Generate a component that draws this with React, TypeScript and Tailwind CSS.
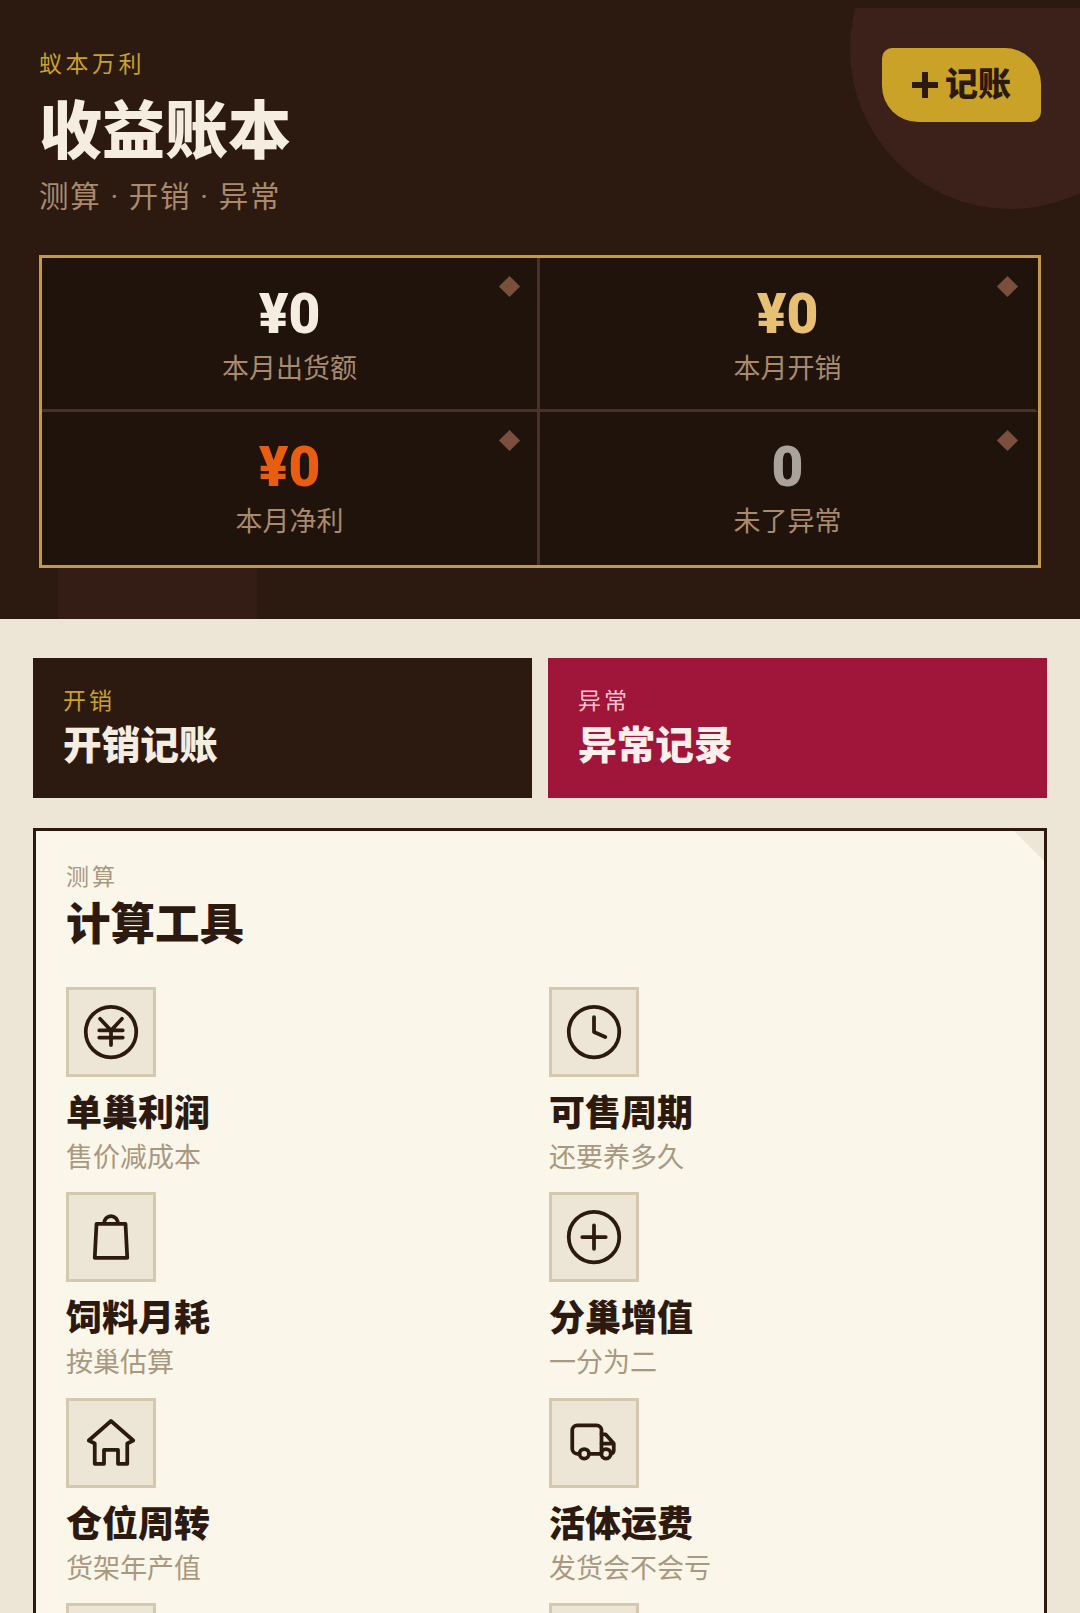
import type { ReactNode } from "react";

const cjk = "font-['Roboto','Noto_Sans_CJK_SC',sans-serif]";

function Stat({
  value,
  label,
  color,
  right,
  bottom
}: {
  value: string;
  label: string;
  color: string;
  right?: boolean;
  bottom?: boolean;
}) {
  return (
    <div
      className={`relative flex flex-col items-center border-r-[3px] ${
        right ? "border-r-transparent" : "border-r-[#4a3228]"
      } ${bottom ? "h-[153px] pt-[25px]" : "h-[154px] border-b-[3px] border-b-[#4a3228] pt-[26px]"}`}
    >
      <div className={`text-[55px] leading-[60px] font-black ${color}`}>{value}</div>
      <div className="mt-[7px] text-[27px] leading-[36px] text-[#a98a6d]">{label}</div>
      <span className="absolute top-[21px] right-[20px] h-[15px] w-[15px] rotate-45 bg-[#7a4f3c]" />
    </div>
  );
}

function Action({
  eyebrow,
  title,
  bg,
  eyebrowColor,
  titleColor
}: {
  eyebrow: string;
  title: string;
  bg: string;
  eyebrowColor: string;
  titleColor: string;
}) {
  return (
    <div className={`h-[140px] px-[30px] pt-[28px] ${bg}`}>
      <div className={`text-[23px] leading-[32px] tracking-[3px] ${eyebrowColor}`}>{eyebrow}</div>
      <div className={`mt-[2px] text-[38.7px] leading-[52px] font-black ${titleColor}`}>{title}</div>
    </div>
  );
}

function Tool({ icon, title, desc }: { icon?: ReactNode; title?: string; desc?: string }) {
  return (
    <div className="h-[205.4px]">
      <div className="flex h-[90px] w-[90px] items-center justify-center border-[3px] border-[#d4c8ae] bg-[#ede5d6] text-[#2c1a10]">
        {icon}
      </div>
      <div className="mt-[13px] text-[36px] leading-[48px] font-black text-[#2c1a10]">{title}</div>
      <div className="mt-[1px] text-[27px] leading-[38px] text-[#a89880]">{desc}</div>
    </div>
  );
}

function Icon({ children }: { children: ReactNode }) {
  return (
    <svg
      viewBox="0 0 24 24"
      className="h-[60px] w-[60px]"
      fill="none"
      stroke="currentColor"
      strokeWidth="1.5"
      strokeLinecap="round"
      strokeLinejoin="round"
    >
      {children}
    </svg>
  );
}

export default function App() {
  return (
    <div className={`h-[1613px] overflow-hidden bg-[#ede5d6] ${cjk}`}>
      <header className="bg-[#2c1a10] pt-[8px]">
        <div className="relative h-[611px] overflow-hidden px-[39px] pt-[41px]">
          <div className="absolute top-[-119px] right-[-90px] h-[320px] w-[320px] rounded-full bg-[#3b2119]" />
          <div className="absolute bottom-[-160px] left-[58px] h-[220px] w-[199px] bg-[#341d15]" />

          <div className="relative flex items-start justify-between">
            <div>
              <div className="text-[23px] leading-[32px] tracking-[3.5px] text-[#c9a227]">蚁本万利</div>
              <h1 className="mt-[12px] text-[63px] leading-[78px] font-black text-[#f5ede0]">收益账本</h1>
              <div className="mt-[6px] text-[29.5px] leading-[40px] tracking-[1.7px] text-[#a98a6d]">
                测算 · 开销 · 异常
              </div>
            </div>
            <button className="mt-[-1px] flex h-[74px] w-[159px] items-center justify-center rounded-tl-[10px] rounded-tr-[36px] rounded-br-[10px] rounded-bl-[36px] bg-[#c9a227] text-[33px] font-black text-[#2c1a10]">
              <svg viewBox="0 0 24 24" className="mr-[7px] h-[26px] w-[26px]" fill="none" stroke="currentColor" strokeWidth="5.5">
                <path d="M12 0v24M0 12h24" />
              </svg>
              记账
            </button>
          </div>

          <div className="relative mt-[38px] grid grid-cols-2 border-[3px] border-[#c49a45] bg-[#20130b]">
            <Stat value="¥0" label="本月出货额" color="text-[#f5ede0]" />
            <Stat value="¥0" label="本月开销" color="text-[#e8c074]" right />
            <Stat value="¥0" label="本月净利" color="text-[#e85d0f]" bottom />
            <Stat value="0" label="未了异常" color="text-[#aaa39c]" right bottom />
          </div>
        </div>
      </header>

      <main className="px-[33px] pt-[39px]">
        <div className="grid grid-cols-2 gap-[16px]">
          <Action eyebrow="开销" title="开销记账" bg="bg-[#2c1a10]" eyebrowColor="text-[#c9a227]" titleColor="text-[#f5ede0]" />
          <Action eyebrow="异常" title="异常记录" bg="bg-[#a0153a]" eyebrowColor="text-[#f9c6d0]" titleColor="text-[#fdf0ec]" />
        </div>

        <section className="relative mt-[30px] border-[3px] border-[#2c1a10] bg-[#fbf6ea] px-[30px] pt-[31px]">
          <div className="absolute top-0 right-0 h-0 w-0 border-t-[30px] border-l-[30px] border-t-[#ede5d6] border-l-transparent" />
          <div className="text-[23px] leading-[32px] tracking-[3px] text-[#a89880]">测算</div>
          <h2 className="mt-[1px] text-[44.5px] leading-[60px] font-black text-[#2c1a10]">计算工具</h2>
          <div className="mt-[32px] grid grid-cols-2 gap-x-[18px]">
            <Tool
              title="单巢利润"
              desc="售价减成本"
              icon={
                <Icon>
                  <circle cx="12" cy="12" r="10.100" />
                  <path d="M7.600 6.700l4.400 4.700 4.400-4.700M7.300 11.300h9.400M7.300 14.200h9.400M12 11.300v5.900" />
                </Icon>
              }
            />
            <Tool
              title="可售周期"
              desc="还要养多久"
              icon={
                <Icon>
                  <circle cx="12" cy="12" r="10.100" />
                  <path d="M12 6v6l4.500 2" />
                </Icon>
              }
            />
            <Tool
              title="饲料月耗"
              desc="按巢估算"
              icon={
                <Icon>
                  <path d="M6.200 6.700h11.600l.7 13.600H5.500zM9.200 6.700a2.800 3.100 0 0 1 5.600 0" />
                </Icon>
              }
            />
            <Tool
              title="分巢增值"
              desc="一分为二"
              icon={
                <Icon>
                  <circle cx="12" cy="12" r="10.100" />
                  <path d="M12 7.300v9.400M7.300 12h9.400" />
                </Icon>
              }
            />
            <Tool
              title="仓位周转"
              desc="货架年产值"
              icon={
                <Icon>
                  <path d="M12 3.200L20.900 11l-2.400 1.200v8.100h-3.700v-5.600H9.200v5.600H5.500v-8.100L3.100 11z" />
                </Icon>
              }
            />
            <Tool
              title="活体运费"
              desc="发货会不会亏"
              icon={
                <Icon>
                  <path d="M6.200 16.300H5.300a2 2 0 0 1-2-2V6.900a2 2 0 0 1 2-2H13a2 2 0 0 1 2 2v9.400M10 16.300h5" />
                  <path d="M15 8.500h1.600l3.300 3.700v2.600a1.500 1.500 0 0 1-1.200 1.500M15 12.200h4.900" />
                  <circle cx="8.100" cy="16.300" r="1.900" />
                  <circle cx="16.800" cy="16.300" r="1.900" />
                </Icon>
              }
            />
            <Tool />
            <Tool />
          </div>
        </section>
      </main>
    </div>
  );
}
